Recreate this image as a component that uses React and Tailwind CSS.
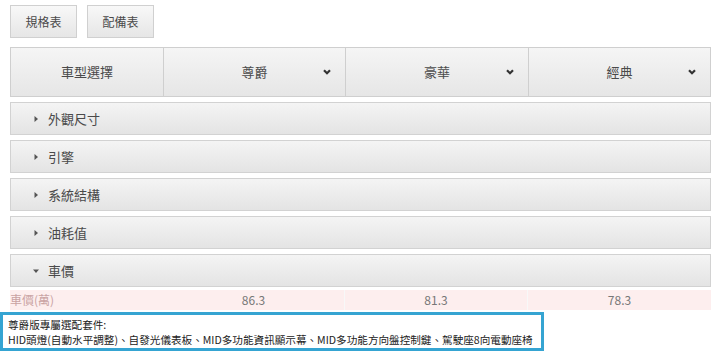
import React from "react";

const font = { fontFamily: '"Noto Sans CJK TC", "Noto Sans", sans-serif' };

function Chevron() {
  return (
    <svg width="8" height="6" viewBox="0 0 8 6" className="absolute right-[14px] top-1/2 -translate-y-1/2">
      <path d="M1 1.2 L4 4.2 L7 1.2" fill="none" stroke="#333" strokeWidth="2.2" />
    </svg>
  );
}

function Row({ label, open }) {
  return (
    <div className="h-[33px] mb-[5px] flex items-center border border-[#d2d2d2] bg-gradient-to-b from-[#f4f4f4] to-[#e4e4e4] pl-[21px] text-[13px] text-[#4a4a4a]">
      {open ? (
        <svg width="8" height="8" viewBox="0 0 8 8" className="mr-[8px]">
          <path d="M1 2.5 L7 2.5 L4 6 Z" fill="#555" />
        </svg>
      ) : (
        <svg width="8" height="8" viewBox="0 0 8 8" className="mr-[8px]">
          <path d="M2.5 1 L6 4 L2.5 7 Z" fill="#555" />
        </svg>
      )}
      <span>{label}</span>
    </div>
  );
}

export default function App() {
  return (
    <div className="w-[720px] h-[361px] bg-white overflow-hidden relative" style={font}>
      <div className="pt-[5px] pl-[10px] flex gap-[10px]">
        <div className="w-[67px] h-[33px] flex items-center justify-center border border-[#d0d0d0] bg-gradient-to-b from-[#f8f8f8] to-[#e6e6e6] text-[12px] text-[#4a4a4a]">規格表</div>
        <div className="w-[67px] h-[33px] flex items-center justify-center border border-[#d0d0d0] bg-gradient-to-b from-[#f8f8f8] to-[#e6e6e6] text-[12px] text-[#4a4a4a]">配備表</div>
      </div>
      <div className="mt-[9px] ml-[10px] w-[701px] h-[50px] flex border border-[#cfcfcf] bg-gradient-to-b from-[#f5f5f5] to-[#e6e6e6] text-[13px] text-[#4a4a4a]">
        <div className="w-[153px] flex items-center justify-center border-r border-[#cfcfcf]">車型選擇</div>
        <div className="w-[182px] relative flex items-center justify-center border-r border-[#cfcfcf]">
          <span>尊爵</span>
          <Chevron />
        </div>
        <div className="w-[183px] relative flex items-center justify-center border-r border-[#cfcfcf]">
          <span>豪華</span>
          <Chevron />
        </div>
        <div className="flex-1 relative flex items-center justify-center">
          <span>經典</span>
          <Chevron />
        </div>
      </div>
      <div className="mt-[5px] ml-[10px] w-[701px]">
        <Row label="外觀尺寸" />
        <Row label="引擎" />
        <Row label="系統結構" />
        <Row label="油耗值" />
        <Row label="車價" open />
      </div>
      <div className="-mt-[2px] ml-[10px] w-[701px] h-[20px] flex bg-[#fdeeee] text-[12px]">
        <div className="w-[153px] flex items-center text-[#c9a3a3]">車價(萬)</div>
        <div className="w-[182px] flex items-center justify-center text-[#777] border-r border-[#f8f8f8]">86.3</div>
        <div className="w-[183px] flex items-center justify-center text-[#777] border-r border-[#f8f8f8]">81.3</div>
        <div className="flex-1 flex items-center justify-center text-[#777]">78.3</div>
      </div>
      <div className="mt-[2px] w-[544px] h-[39px] border-[3px] border-[#35a4d2] pl-[5px] pt-[2px] text-[10.6px] leading-[15px] text-[#222] whitespace-nowrap">
        <div>尊爵版專屬選配套件:</div>
        <div>HID頭燈(自動水平調整)、自發光儀表板、MID多功能資訊顯示幕、MID多功能方向盤控制鍵、駕駛座8向電動座椅</div>
      </div>
    </div>
  );
}
